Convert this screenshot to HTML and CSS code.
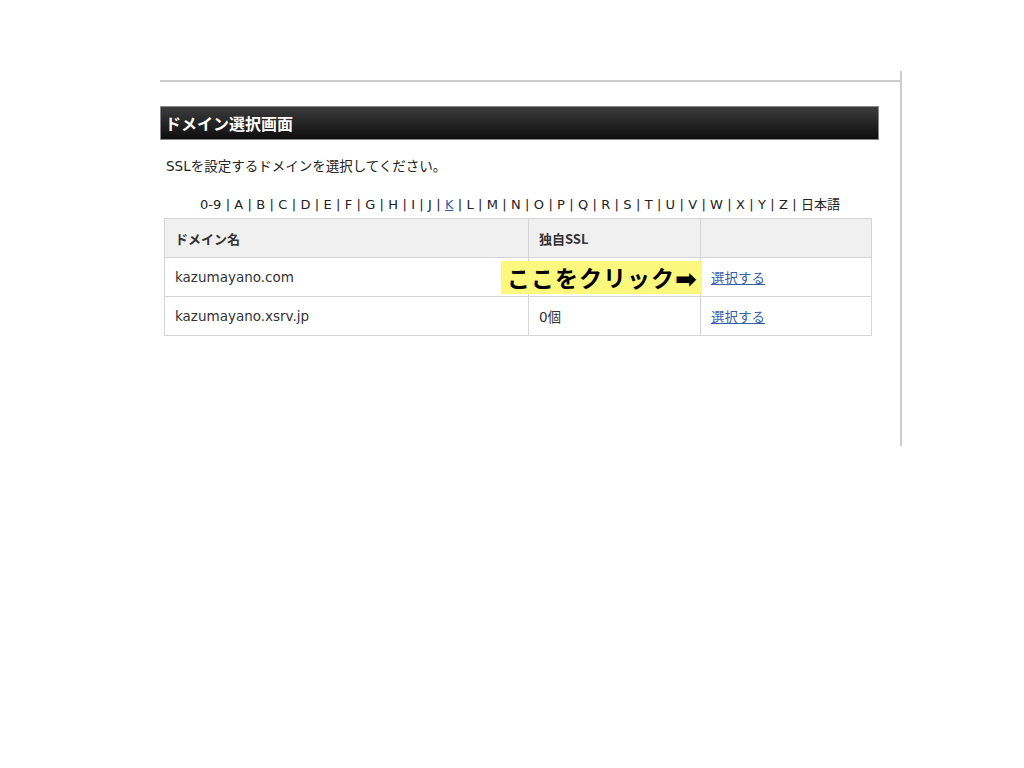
FILE: index.html
```html
<!DOCTYPE html>
<html>
<head>
  <meta charset="utf-8">
  <link rel="stylesheet" href="styles.css">
</head>
<body>
  <div class="page">
    <div class="content">
      <h2 class="title">ドメイン選択画面</h2>
      <p class="lead">SSLを設定するドメインを選択してください。</p>

      <div class="index">
        0-9 | A | B | C | D | E | F | G | H | I | J | <a href="#">K</a> | L | M | N | O | P | Q | R | S | T | U | V | W | X | Y | Z | 日本語
      </div>

      <div class="table-wrap">
        <table class="domains">
          <tr>
            <th class="col-name">ドメイン名</th>
            <th class="col-ssl">独自SSL</th>
            <th></th>
          </tr>
          <tr>
            <td>kazumayano.com</td>
            <td></td>
            <td><a href="#">選択する</a></td>
          </tr>
          <tr>
            <td>kazumayano.xsrv.jp</td>
            <td>0個</td>
            <td><a href="#">選択する</a></td>
          </tr>
        </table>
        <div class="callout">ここをクリック<span class="arrow">➡</span></div>
      </div>
    </div>
  </div>
</body>
</html>
```

FILE: styles.css
```css
body {
  margin: 0;
  font-family: "DejaVu Sans", "Noto Sans CJK JP", sans-serif;
  color: #222;
  background: #fff;
}
.page {
  margin: 71px 0 0 160px;
  padding-top: 9px;
  width: 740px;
  height: 366px;
  border-right: 2px solid #ccc;
}
.content {
  border-top: 2px solid #ccc;
  padding-top: 24px;
}
.title {
  width: 713px;
  margin: 0;
  padding: 0 0 0 4px;
  height: 32px;
  line-height: 32px;
  font-family: "Noto Sans CJK JP", sans-serif;
  font-size: 16px;
  font-weight: bold;
  color: #fff;
  background: linear-gradient(#3c3c3c, #0e0e0e);
  border: 1px solid #888;
}
.lead {
  margin: 16px 0 0 6px;
  font-size: 13.5px;
  line-height: 20px;
}
.index {
  margin: 19px 0 0 0;
  width: 720px;
  text-align: center;
  font-size: 13px;
  line-height: 20px;
  word-spacing: 0.2px;
}
.index a, .domains a {
  color: #3560a8;
}
.table-wrap {
  position: relative;
  margin: 3px 0 0 4px;
  width: 708px;
}
.domains {
  width: 708px;
  border-collapse: collapse;
  font-size: 13.5px;
  color: #333;
}
.domains th, .domains td {
  border: 1px solid #d4d4d4;
  height: 38px;
  padding: 0 10px;
  text-align: left;
}
.domains th {
  background: #f0f0f0;
  font-family: "Noto Sans CJK JP", sans-serif;
  font-size: 13px;
  font-weight: bold;
}
.col-name {
  width: 343px;
}
.col-ssl {
  width: 151px;
}
.callout {
  position: absolute;
  left: 337px;
  top: 43px;
  width: 201px;
  height: 33px;
  line-height: 33px;
  background: #fcf87e;
  font-family: "Noto Sans CJK JP", sans-serif;
  font-size: 23px;
  font-weight: bold;
  color: #000;
  letter-spacing: 1px;
  padding-left: 6px;
  box-sizing: border-box;
  white-space: nowrap;
}
.arrow {
  font-family: "DejaVu Sans", sans-serif;
  font-size: 26px;
  letter-spacing: 0;
  vertical-align: -1px;
}
```
